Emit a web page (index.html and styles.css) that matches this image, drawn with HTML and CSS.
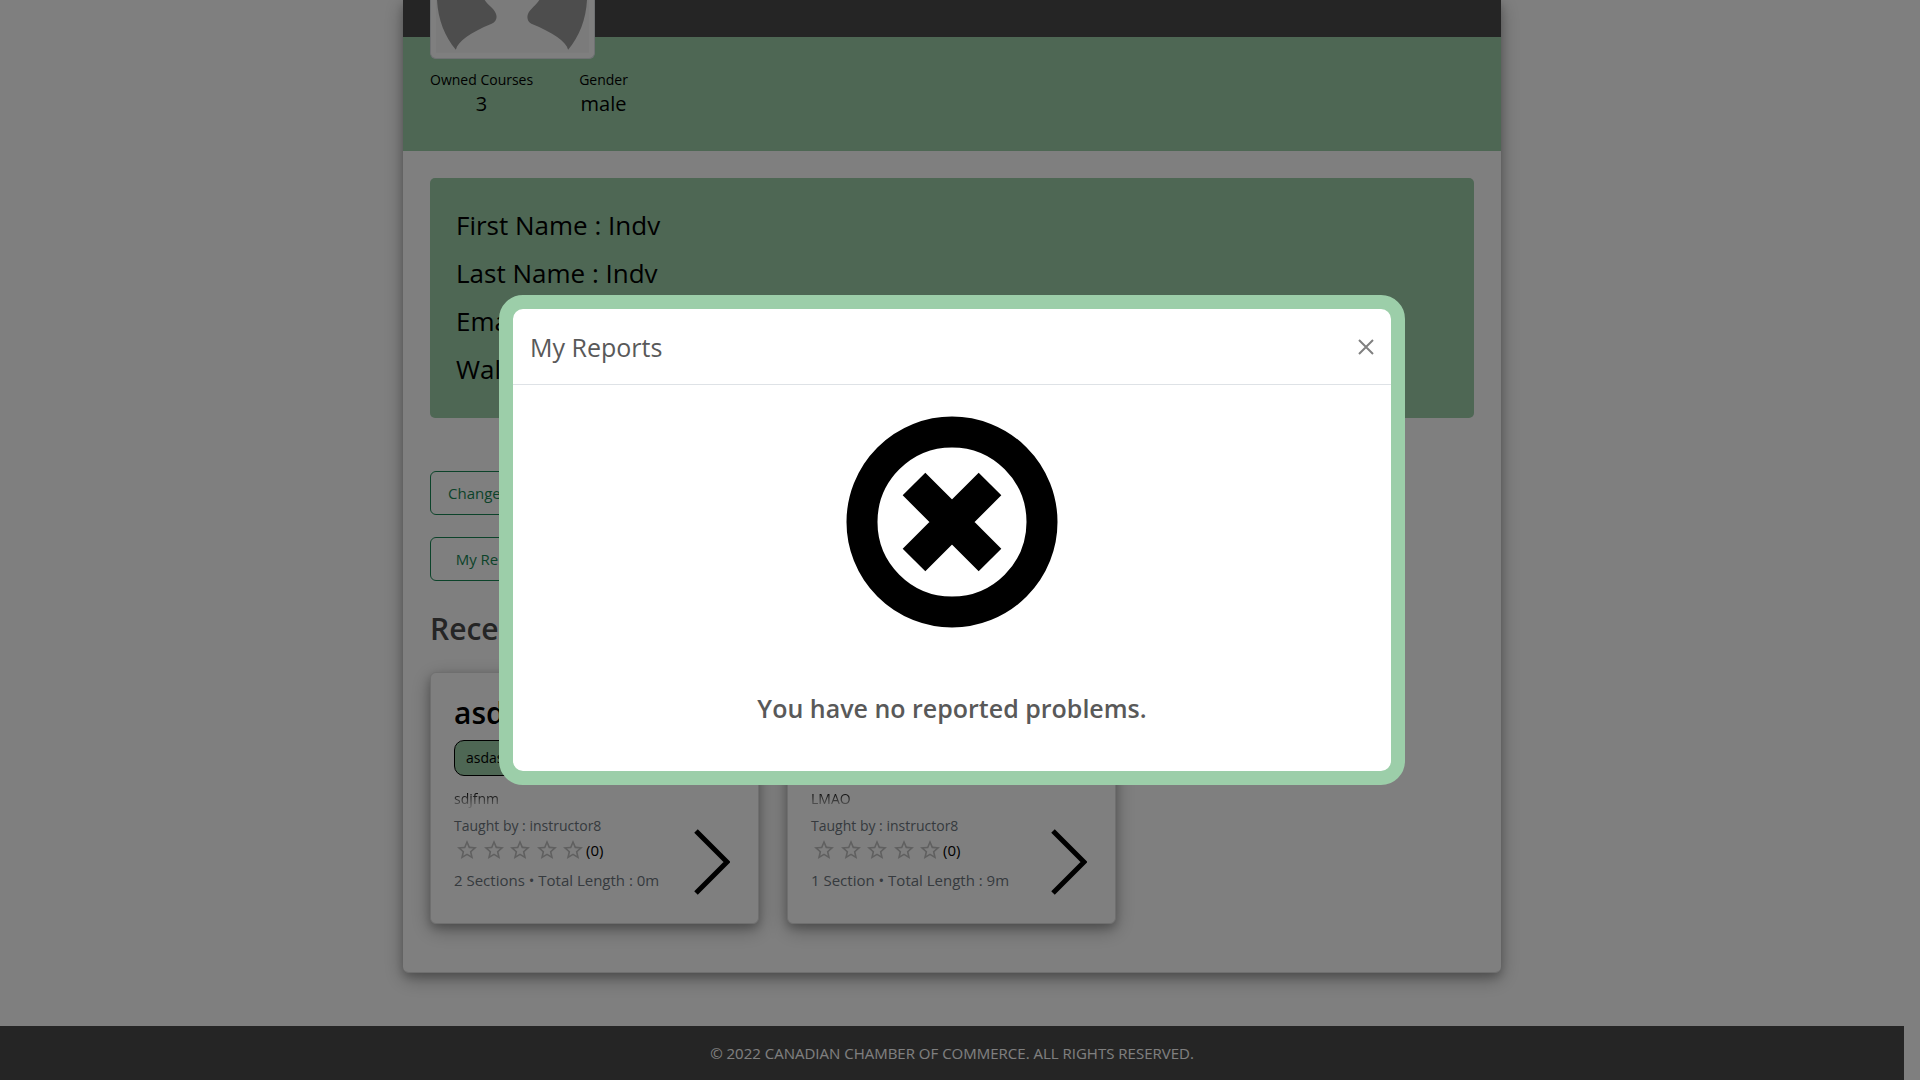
FILE: index.html
```html
<!DOCTYPE html>
<html lang="en">
<head>
<meta charset="utf-8">
<title>My Profile</title>
<link rel="stylesheet" href="styles.css">
</head>
<body>
<svg class="sprite" aria-hidden="true">
  <symbol id="star" viewBox="0 0 24 24"><path d="M22 9.24l-7.19-.62L12 2 9.19 8.63 2 9.24l5.46 4.73L5.82 21 12 17.27 18.18 21l-1.63-7.03L22 9.24zM12 15.4l-3.76 2.27 1-4.28-3.32-2.88 4.38-.38L12 6.1l1.71 4.04 4.38.38-3.32 2.88 1 4.28L12 15.4z"/></symbol>
  <symbol id="chevron" viewBox="0 0 36 66"><path d="M2 2L33 33L2 64" fill="none" stroke="currentColor" stroke-width="5"/></symbol>
</svg>

<main class="page">
  <article class="profile">
    <div class="banner"></div>
    <header class="summary">
      <div class="avatar">
        <svg viewBox="0 0 154 53" role="img" aria-label="Profile picture">
          <rect width="154" height="53" fill="#f6f6f6"/>
          <path d="M1 0C2 20 9 37 20 50C22 42 34 33 56 24C61 22 62 17 60 13C58 8 52 5 49 0ZM152 0C151 20 144 37 133 50C131 42 118 33 96 24C92 22 91 17 93 13C95 9 101 5 104 0Z" fill="#9a9a9a"/>
        </svg>
      </div>
      <dl class="stats">
        <div class="stat"><dt>Owned Courses</dt><dd>3</dd></div>
        <div class="stat"><dt>Gender</dt><dd>male</dd></div>
      </dl>
    </header>

    <div class="content">
      <section class="info">
        <p>First Name : Indv</p>
        <p>Last Name : Indv</p>
        <p>Email</p>
        <p>Wallet</p>
      </section>

      <div class="actions">
        <button type="button" class="btn">Change Email</button>
        <button type="button" class="btn">My Reports</button>
      </div>

      <h2 class="heading">Recent</h2>

      <div class="courses">
        <section class="course">
          <h3>asdas</h3>
          <span class="tag">asdas</span>
          <p class="desc">sdjfnm</p>
          <div class="row">
            <div class="details">
              <p>Taught by : instructor8</p>
              <div class="rating">
                <div class="stars"><svg><use href="#star"/></svg><svg><use href="#star"/></svg><svg><use href="#star"/></svg><svg><use href="#star"/></svg><svg><use href="#star"/></svg></div>
                <span>(0)</span>
              </div>
              <p class="length">2 Sections • Total Length : 0m</p>
            </div>
            <a class="open" href="#" aria-label="Open course"><svg><use href="#chevron"/></svg></a>
          </div>
        </section>
        <section class="course">
          <div class="course-top"></div>
          <p class="desc">LMAO</p>
          <div class="row">
            <div class="details">
              <p>Taught by : instructor8</p>
              <div class="rating">
                <div class="stars"><svg><use href="#star"/></svg><svg><use href="#star"/></svg><svg><use href="#star"/></svg><svg><use href="#star"/></svg><svg><use href="#star"/></svg></div>
                <span>(0)</span>
              </div>
              <p class="length">1 Section • Total Length : 9m</p>
            </div>
            <a class="open" href="#" aria-label="Open course"><svg><use href="#chevron"/></svg></a>
          </div>
        </section>
      </div>
    </div>
  </article>
</main>

<footer class="footer">© 2022 CANADIAN CHAMBER OF COMMERCE. ALL RIGHTS RESERVED.</footer>

<div class="backdrop">
  <dialog open class="modal" aria-labelledby="modal-title">
    <header class="modal-header">
      <h2 id="modal-title">My Reports</h2>
      <button type="button" class="close" aria-label="Close">
        <svg viewBox="0 0 16 16"><path d="M1 1L15 15M15 1L1 15" fill="none" stroke="currentColor" stroke-width="2"/></svg>
      </button>
    </header>
    <div class="modal-body">
      <svg class="empty-icon" viewBox="0 0 212 212" aria-hidden="true">
        <circle cx="106" cy="106" r="90" fill="none" stroke="#000" stroke-width="31"/>
        <path d="M68 68L144 144M144 68L68 144" stroke="#000" stroke-width="32"/>
      </svg>
      <p>You have no reported problems.</p>
    </div>
  </dialog>
</div>
</body>
</html>
```
FILE: styles.css
```css
* { box-sizing: border-box; }

body {
  margin: 0;
  padding-right: 16px;
  min-height: 100vh;
  display: flex;
  flex-direction: column;
  overflow: hidden;
  background: #fff;
  color: #000;
  font: 15px/24px "Open Sans", "Noto Sans", sans-serif;
}

h2, h3, p, dl, dd { margin: 0; }
button { font: inherit; }
.sprite { position: absolute; width: 0; height: 0; }

.page { flex: 1; padding-bottom: 53px; }

.profile {
  width: 100%;
  max-width: 1098px;
  margin: 0 auto;
  background: #fff;
  border: 1px solid #dfdfdf;
  border-width: 0 0 1px;
  border-radius: 0 0 6px 6px;
  box-shadow: 0 4px 8px rgba(0, 0, 0, .2), 0 6px 20px rgba(0, 0, 0, .3);
}

.banner { height: 37px; background: #4a4a4a; }

.summary {
  display: flow-root;
  padding: 0 27px 34px;
  background: #9ccea9;
}
.avatar {
  position: relative;
  width: 165px;
  height: 59px;
  margin-top: -37px;
  padding: 0 5px;
  background: #fff;
  border: 1px solid #dee2e6;
  border-top: 0;
  border-radius: 0 0 6px 6px;
}
.avatar svg { display: block; width: 100%; }

.stats { display: flex; gap: 46px; padding-top: 10px; text-align: center; }
.stat dt { font-size: 14px; line-height: 22px; }
.stat dd { font-size: 20px; line-height: 26px; }

.content { padding: 27px 27px 48px; }

.info {
  padding: 23px 26px 25px;
  background: #9ccea9;
  border-radius: 5px;
  font-size: 26px;
  line-height: 48px;
}

.actions {
  display: inline-flex;
  flex-direction: column;
  gap: 22px;
  margin-top: 53px;
}
.btn {
  height: 44px;
  padding: 0 17px;
  background: transparent;
  border: 1px solid #198754;
  border-radius: 6px;
  color: #198754;
}

.heading {
  margin: 28px 0 23px;
  color: #4a4a4a;
  font-size: 30px;
  font-weight: 600;
  line-height: 40px;
}

.courses { display: flex; flex-wrap: wrap; gap: 28px; }
.course {
  width: 329px;
  padding: 20px 23px 28px;
  background: #fff;
  border: 1px solid #dfdfdf;
  border-radius: 6px;
  box-shadow: 0 4px 8px rgba(0, 0, 0, .2), 0 6px 20px rgba(0, 0, 0, .3);
}
.course h3 {
  margin-bottom: 7px;
  font-size: 30px;
  font-weight: 600;
  line-height: 40px;
}
.tag {
  display: block;
  width: fit-content;
  padding: 0 11px;
  background: #9ccea9;
  border: 1px solid #000;
  border-radius: 10px;
  font-size: 14px;
  line-height: 34px;
}
.course-top { height: 83px; }
.desc {
  height: 24px;
  margin-top: 11px;
  overflow: hidden;
  font-size: 14px;
  -webkit-mask-image: linear-gradient(#000 20%, transparent);
  mask-image: linear-gradient(#000 20%, transparent);
}
.row { display: flex; justify-content: space-between; margin-top: 3px; }
.details { color: #6c757d; font-size: 14px; }
.length { font-size: 15px; }
.rating {
  display: flex;
  align-items: center;
  height: 24px;
  margin-bottom: 6px;
  color: #000;
  font-size: 15px;
}
.stars { display: flex; justify-content: space-between; width: 132px; padding: 0 1px; }
.stars svg { width: 24px; height: 24px; fill: #c0c0c0; }
.open { margin: 15px 5px 0 0; color: #000; }
.open svg { display: block; width: 36px; height: 66px; }

.footer {
  padding: 16px;
  background: #4a4a4a;
  color: #fff;
  line-height: 23px;
  text-align: center;
}

.backdrop {
  position: fixed;
  inset: 0;
  display: flex;
  align-items: center;
  justify-content: center;
  padding-right: 16px;
  background: rgba(0, 0, 0, .5);
}
.modal {
  position: static;
  width: 100%;
  max-width: 906px;
  margin: 0;
  padding: 0;
  background: #fff;
  border: 14px solid #9ccea9;
  border-radius: 24px;
  color: #595959;
}
.modal-header {
  display: flex;
  align-items: center;
  justify-content: space-between;
  height: 76px;
  padding: 0 17px;
  border-bottom: 1px solid #dee2e6;
}
.modal-header h2 { font-size: 25px; font-weight: 400; line-height: 36px; }
.close { padding: 0; background: none; border: 0; color: #808080; }
.close svg { display: block; width: 16px; height: 16px; }
.modal-body {
  display: flex;
  flex-direction: column;
  align-items: center;
  gap: 60px;
  padding: 31px 16px 43px;
}
.empty-icon { width: 212px; height: 212px; }
.modal-body p { font-size: 25px; font-weight: 600; line-height: 40px; }
```
